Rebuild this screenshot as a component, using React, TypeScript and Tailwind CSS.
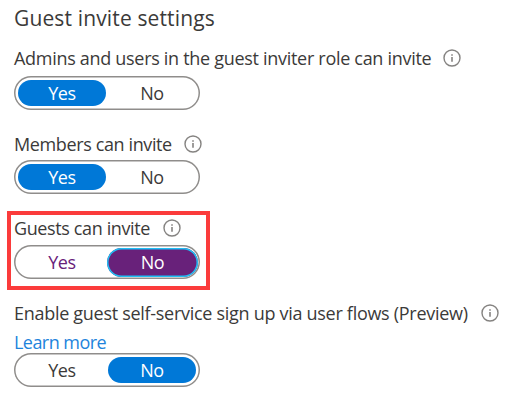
type ToggleProps = { value: 'Yes' | 'No'; focused?: boolean };

function Toggle({ value, focused = false }: ToggleProps) {
  const option = (name: 'Yes' | 'No') => {
    const base = 'flex items-center justify-center rounded-full';
    if (name !== value) {
      return `${base} h-[26px] w-[88px] ${focused ? 'text-[#68217a]' : 'text-[#3b3a39]'}`;
    }
    return focused
      ? `${base} h-[29px] w-[91px] bg-[#68217a] font-medium text-white shadow-[inset_0_0_0_1.5px_#1fc0f5]`
      : `${base} h-[26px] w-[88px] bg-[#0078d7] font-medium text-white`;
  };
  return (
    <div
      className={`flex h-[34px] w-[186px] items-center justify-between rounded-full bg-white text-[18px] leading-[24px] tracking-[-0.35px] shadow-[inset_0_0_0_1.5px_#8f8d8b] ${focused ? 'pl-[4px] pr-[2px]' : 'px-[4px]'}`}
    >
      <span className={option('Yes')}>Yes</span>
      <span className={option('No')}>No</span>
    </div>
  );
}

function InfoIcon() {
  return (
    <svg width="18" height="18" viewBox="0 0 18 18" fill="none" className="shrink-0">
      <circle cx="9" cy="9" r="8" stroke="#858381" strokeWidth="1.4" />
      <path d="M9 8V12.8M9 5.2V6.8" stroke="#858381" strokeWidth="1.6" />
    </svg>
  );
}

function Label({ text, className }: { text: string; className: string }) {
  return (
    <div className="flex h-6 items-center text-[18px] leading-[24px] text-[#3b3a39]">
      <span className={`shrink-0 whitespace-nowrap ${className}`}>{text}</span>
      <InfoIcon />
    </div>
  );
}

export default function App() {
  return (
    <main className="h-[401px] w-[514px] overflow-hidden bg-white pl-[14px] font-['Open_Sans','Noto_Sans',sans-serif]">
      <h1 className="mt-[4px] h-[28px] whitespace-nowrap text-[21px] leading-[28px] tracking-[0.14px] text-[#3b3a39]">
        Guest invite settings
      </h1>
      <section className="mt-[14px]">
        <Label text="Admins and users in the guest inviter role can invite" className="w-[429px] tracking-[-0.3px]" />
        <div className="mt-[6px]"><Toggle value="Yes" /></div>
      </section>
      <section className="mt-[22px]">
        <Label text="Members can invite" className="w-[170px] tracking-[-0.38px]" />
        <div className="mt-[4px]"><Toggle value="Yes" /></div>
      </section>
      <section className="-ml-[7px] mt-[17px] h-[79px] w-[203px] border-4 border-[#fb3b3b] pl-[3px] pt-px">
        <Label text="Guests can invite" className="w-[149px] tracking-[-0.38px]" />
        <div className="mt-[5px]"><Toggle value="No" focused /></div>
      </section>
      <section className="mt-[11px]">
        <Label text="Enable guest self-service sign up via user flows (Preview)" className="w-[467px] tracking-[-0.29px]" />
        <a className="mt-[5px] block h-[23px] text-[18px] leading-[24px] tracking-[-0.55px] text-[#1e84dc]">Learn more</a>
        <Toggle value="No" />
      </section>
    </main>
  );
}
